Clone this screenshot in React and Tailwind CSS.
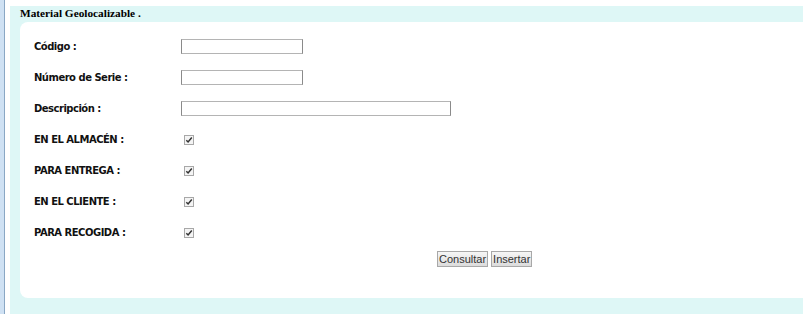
import React from "react";

function Check() {
  return (
    <span className="flex h-[10px] w-[10px] items-center justify-center border border-[#a8a8a8] bg-[#f4f4f4]">
      <svg width="8" height="8" viewBox="0 0 8 8">
        <path d="M1.3 4.2 L3.1 6 L6.8 1.6" fill="none" stroke="#333" strokeWidth="1.5" />
      </svg>
    </span>
  );
}

function Input({ w }) {
  return <div className={`h-[15px] border border-[#b4b4b4] border-l-[#8a8a8a] border-r-[#8a8a8a] bg-white ${w}`} />;
}

const rows = [
  { label: "Código :", field: <Input w="w-[122px]" /> },
  { label: "Número de Serie :", field: <Input w="w-[122px]" /> },
  { label: "Descripción :", field: <Input w="w-[270px]" /> },
  { label: "EN EL ALMACÉN :", field: <Check />, cb: true },
  { label: "PARA ENTREGA :", field: <Check />, cb: true },
  { label: "EN EL CLIENTE :", field: <Check />, cb: true },
  { label: "PARA RECOGIDA :", field: <Check />, cb: true },
];

export default function App() {
  return (
    <div className="flex h-[314px] w-[803px] overflow-hidden bg-white">
      <div className="w-[4px] bg-[#cfe1f3]" />
      <div className="w-px bg-[#8aa7c4]" />
      <div className="w-[5px] bg-white" />
      <div className="flex flex-1 flex-col pt-[6px]">
        <div className="flex h-[16px] items-center bg-[#def7f6] pl-[10px] font-['Liberation_Serif',serif] text-[11.3px] font-bold leading-none text-black">
          Material Geolocalizable .
        </div>
        <div className="flex h-[276px] bg-[#def7f6] pl-[10px]">
          <div className="flex flex-1 flex-col rounded-l-[8px] bg-white pl-[14px] pt-[9px] font-['DejaVu_Sans',sans-serif] text-[10px] font-bold tracking-[-0.5px] text-[#111]">
            {rows.map((r, i) => (
              <div key={i} className="flex h-[31px] items-center">
                <div className="w-[147px]">{r.label}</div>
                <div className={r.cb ? "pl-[3px]" : ""}>{r.field}</div>
              </div>
            ))}
            <div className="mt-[3px] flex gap-[3px] pl-[403px] font-['Liberation_Sans',sans-serif] text-[11px] font-normal tracking-normal">
              <button className="h-[16px] border border-[#a8a8a8] bg-gradient-to-b from-[#f6f6f6] to-[#dcdcdc] px-[1px] leading-none text-[#333]">
                Consultar
              </button>
              <button className="h-[16px] border border-[#a8a8a8] bg-gradient-to-b from-[#f6f6f6] to-[#dcdcdc] px-[1px] leading-none text-[#333]">
                Insertar
              </button>
            </div>
          </div>
        </div>
        <div className="flex-1 bg-[#def7f6]" />
      </div>
    </div>
  );
}
